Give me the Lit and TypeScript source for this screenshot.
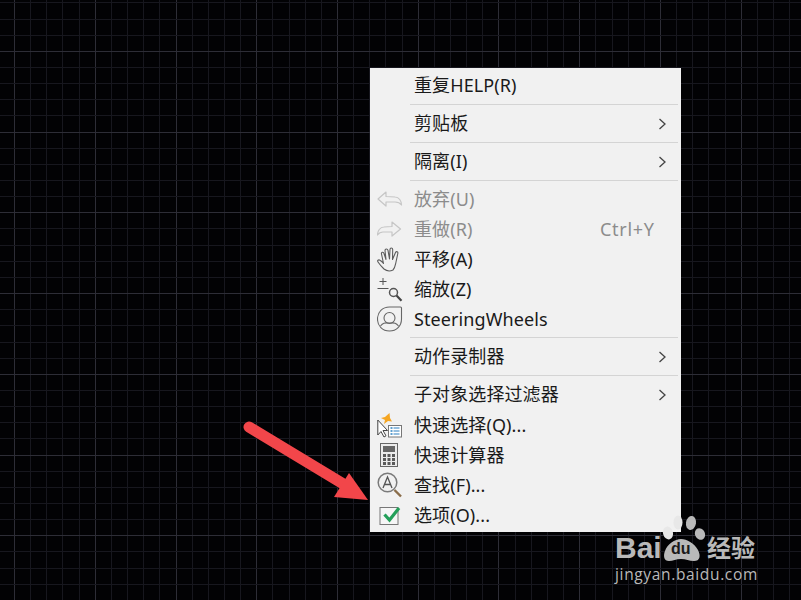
import { LitElement, html, css, svg } from "lit";
import { customElement } from "lit/decorators.js";

const icons: Record<string, unknown> = {
  undo: svg`<svg viewBox="0 0 26 20" width="26" height="20"><path d="M9 3 1 10l8 7v-4h9c3 0 5 1 6.500 3 0-4-2.500-8-6.500-8l-9-.5z" fill="none" stroke="#c6c6c6" stroke-width="1.2" stroke-linejoin="round"/></svg>`,
  redo: svg`<svg viewBox="0 0 26 20" width="26" height="20"><path d="M15 3l8.500 7-8.500 7v-4H6c-2.500 0-4 1-5.500 3 0-4 2.500-8 6.500-8l8-.5z" fill="none" stroke="#c6c6c6" stroke-width="1.2" stroke-linejoin="round"/></svg>`,
  hand: svg`<svg viewBox="0 0 26 26" width="26" height="26"><path d="M7 23c-2-2-4-4-6-7-1-1.500.5-2.500 1.500-2s3 2 4 3.500L4.500 8c-.5-2 2-2.500 2.500-.5l2 6L8 4.500c0-2 2.500-2 3-.2l1.500 8.700.5-9.500c0-2 2.600-2 2.700 0l-.2 10 3-7c.8-1.500 2.800-1 2.300 1L19 16c-.7 3-1 6-3 8-2.500 1.200-6.500 1-9-1z" fill="none" stroke="#5c5c5c" stroke-width="1.1" stroke-linejoin="round"/></svg>`,
  zoom: svg`<svg viewBox="0 0 26 26" width="26" height="26"><path d="M6 2v7M2.500 5.500h7M.5 12.500h11" stroke="#555" stroke-width="1" fill="none"/><circle cx="16.500" cy="16.500" r="4" fill="none" stroke="#555" stroke-width="1.500"/><path d="M19.500 19.500l5 5.200" stroke="#444" stroke-width="2.200"/></svg>`,
  wheel: svg`<svg viewBox="0 0 26 26" width="26" height="26"><path d="M12.500 1h11c1 0 1 1 1 1v11c0 7-5 12-12 12S.5 20 .5 13 5.500 1 12.500 1z" fill="none" stroke="#666" stroke-width="1.1"/><circle cx="12.500" cy="12" r="5.500" fill="none" stroke="#666" stroke-width="1.1"/><path d="M3.500 20c3-4 5-3 9-3s6-1 9 3" fill="none" stroke="#666" stroke-width="1.1"/></svg>`,
  qselect: svg`<svg viewBox="0 0 26 26" width="26" height="26"><path d="M12.500 1 8 5 4 6l4 2-1 4 4-3 4 .5-2-3.500z" fill="#f5a623"/><path d="M.8 8v15l3.200-3.500 3 5.500 2-1.200-3-5.300h4.500z" fill="#fff" stroke="#444" stroke-width="1"/><rect x="11.500" y="13.500" width="13" height="11.500" fill="#fff" stroke="#777"/><path d="M13.500 16h2M13.500 19h2M13.500 22h2" stroke="#2a7fbf" stroke-width="1.600"/><path d="M16.500 16h6M16.500 19h6M16.500 22h6" stroke="#2a7fbf" stroke-width="1.200"/></svg>`,
  calc: svg`<svg viewBox="0 0 26 26" width="26" height="26"><rect x="3.500" y="1.500" width="17" height="23" fill="#ececec" stroke="#666"/><rect x="6" y="4" width="12" height="6" fill="#666"/><path d="M6 12h3v3H6zM10.500 12h3v3h-3zM15 12h3v3h-3zM6 16h3v3H6zM10.500 16h3v3h-3zM15 16h3v3h-3zM6 20h3v3H6zM10.500 20h3v3h-3zM15 20h3v3h-3z" fill="#5a5a5a"/></svg>`,
  find: svg`<svg viewBox="0 0 26 26" width="26" height="26"><circle cx="10.500" cy="10.500" r="9.300" fill="none" stroke="#7a7a7a" stroke-width="1.500"/><path d="M6 16l4.500-11 4.500 11M7.500 12.500h6" fill="none" stroke="#555" stroke-width="1.300"/><path d="M17.500 18l6.500 6.500" stroke="#8a6d4a" stroke-width="2.400"/></svg>`,
  opts: svg`<svg viewBox="0 0 26 26" width="26" height="26"><rect x="3" y="5.500" width="18" height="17" fill="#f6f6f6" stroke="#777"/><path d="M7.500 12.500l5 5.500 9.500-12" fill="none" stroke="#24a05a" stroke-width="3.200"/></svg>`,
};

type Item = { label?: string; icon?: string; off?: boolean; key?: string; sub?: boolean; cls?: string };

const items: Item[] = [
  { label: "重复HELP(R)" },
  {},
  { label: "剪贴板", sub: true },
  {},
  { label: "隔离(I)", sub: true },
  {},
  { label: "放弃(U)", icon: "undo", off: true },
  { label: "重做(R)", icon: "redo", off: true, key: "Ctrl+Y" },
  { label: "平移(A)", icon: "hand" },
  { label: "缩放(Z)", icon: "zoom" },
  { label: "SteeringWheels", icon: "wheel" },
  { cls: "snug" },
  { label: "动作录制器", sub: true },
  {},
  { label: "子对象选择过滤器", sub: true },
  { label: "快速选择(Q)...", icon: "qselect", cls: "tall" },
  { label: "快速计算器", icon: "calc" },
  { label: "查找(F)...", icon: "find" },
  { label: "选项(O)...", icon: "opts" },
];

@customElement("app-root")
export class AppRoot extends LitElement {
  static styles = css`
    :host {
      display: block;
      position: relative;
      width: 801px;
      height: 600px;
      overflow: hidden;
      background-color: #020204;
      font-family: "Noto Sans", "Noto Sans CJK SC", sans-serif;
    }
    .grid { position: absolute; inset: 0; }
    .menu {
      position: absolute;
      left: 370px;
      top: 68px;
      width: 311px;
      height: 464px;
      box-sizing: border-box;
      padding-top: 2px;
      background: #f1f1f1;
      display: flex;
      flex-direction: column;
    }
    .row {
      height: 30px;
      display: flex;
      align-items: center;
      font-size: 18px;
      color: #1a1a1a;
    }
    .row.tall { margin-top: 1px; }
    .row.off { color: #8c8c8c; }
    .ic {
      width: 44px;
      flex: none;
      display: flex;
      align-items: center;
      justify-content: center;
      padding-right: 5px;
      box-sizing: border-box;
    }
    .ic svg { display: block; }
    .label { flex: 1; white-space: nowrap; line-height: 28px; letter-spacing: 0.1px; }
    .key { width: 81px; flex: none; line-height: 28px; letter-spacing: 0.7px; }
    .chev { width: 23px; flex: none; display: flex; padding-top: 2px; }
    .sep {
      height: 1px;
      margin: 4px 3px 3px 40px;
      background: #d4d4d4;
      flex: none;
    }
    .sep.snug { margin-top: 3px; }
    .overlay { position: absolute; left: 0; top: 0; pointer-events: none; }
    .wm {
      position: absolute;
      left: 615px;
      top: 515px;
      width: 150px;
      height: 70px;
      color: #b9b9b9;
      font-family: "Liberation Sans", "Noto Sans CJK SC", sans-serif;
    }
    .wm svg { position: absolute; left: 0; top: 0; }
    .bai { position: absolute; left: 0; top: 19px; font-size: 30px; font-weight: 700; line-height: 28px; }
    .du { position: absolute; left: 56px; top: 27px; font-size: 16px; font-weight: 700; line-height: 14px; color: #1a1a1a; }
    .jy { position: absolute; left: 92px; top: 20px; font-size: 24px; font-weight: 700; line-height: 28px; white-space: nowrap; }
    .url { position: absolute; left: 0; top: 51px; font-size: 15.500px; line-height: 17px; letter-spacing: 0.65px; white-space: nowrap; font-family: "Open Sans", sans-serif; }
  `;

  private gridLines() {
    const lines: unknown[] = [];
    const step = 16.15;
    for (let i = 0; i < 50; i++) {
      const x = Math.round(14 + i * step) + 0.5;
      const major = i % 5 === 0;
      lines.push(svg`<line x1=${x} x2=${x} y1="0" y2="600" stroke=${major ? "#2d2d36" : "#17171e"} />`);
    }
    for (let i = 0; i < 38; i++) {
      const y = Math.round(2.4 + i * step) + 0.5;
      const major = (i - 3) % 5 === 0;
      lines.push(svg`<line y1=${y} y2=${y} x1="0" x2="801" stroke=${major ? "#2d2d36" : "#17171e"} />`);
    }
    return lines;
  }

  render() {
    return html`
      <svg class="grid" width="801" height="600">${this.gridLines()}</svg>
      <div class="menu">
        ${items.map((it) =>
          it.label
            ? html`<div class="row ${it.off ? "off" : ""} ${it.cls ?? ""}">
                <span class="ic">${it.icon ? icons[it.icon] : ""}</span>
                <span class="label">${it.label}</span>
                ${it.key ? html`<span class="key">${it.key}</span>` : ""}
                ${it.sub
                  ? html`<span class="chev"><svg width="9" height="12" viewBox="0 0 9 12"><path d="M1.500 1l5.500 5-5.500 5" fill="none" stroke="#444" stroke-width="1.300"/></svg></span>`
                  : ""}
              </div>`
            : html`<div class="sep ${it.cls ?? ""}"></div>`
        )}
      </div>
      <svg class="overlay" width="801" height="600">
        <path d="M249 427 350 488" stroke="#f2464a" stroke-width="11" stroke-linecap="round" fill="none"/>
        <path d="M349 473 368 500 334 497z" fill="#f2464a"/>
      </svg>
      <div class="wm">
        <svg width="150" height="70" viewBox="0 0 150 70">
          <ellipse cx="53" cy="18" rx="5" ry="6.500" fill="#e8e8e8" transform="rotate(-15 53 18)"/>
          <ellipse cx="63" cy="7.500" rx="4.500" ry="7" fill="#e8e8e8"/>
          <ellipse cx="76" cy="8" rx="5" ry="7" fill="#b9b9b9" transform="rotate(10 76 8)"/>
          <ellipse cx="85" cy="19" rx="5" ry="6" fill="#b9b9b9" transform="rotate(-25 85 19)"/>
          <path d="M50 36c2-7 10-12 16-12s13 4 17 11c3 6 2 11-4 11-5 0-8-2-13-2s-8 2-12 2c-5 0-6-5-4-10z" fill="#b9b9b9"/>
        </svg>
        <span class="bai">Bai</span>
        <span class="du">du</span>
        <span class="jy">经验</span>
        <span class="url">jingyan.baidu.com</span>
      </div>
    `;
  }
}
